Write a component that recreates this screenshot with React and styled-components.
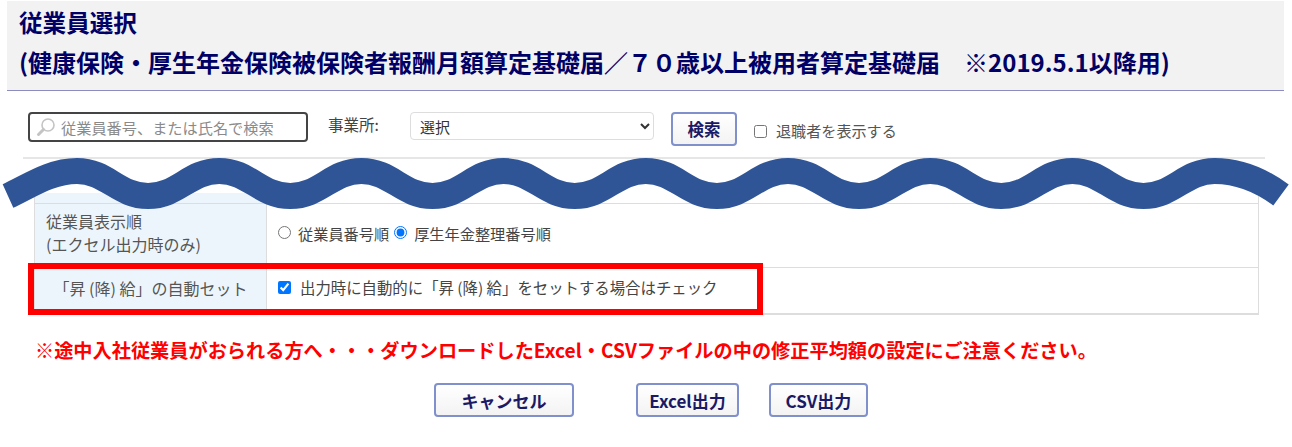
import React from "react";
import styled, { createGlobalStyle } from "styled-components";

const GlobalStyle = createGlobalStyle`
  html, body {
    margin: 0;
    padding: 0;
    background: #fff;
    font-family: "Noto Sans CJK JP", "Noto Sans", sans-serif;
    color: #444;
  }
`;

const Page = styled.div`
  position: relative;
  width: 1292px;
  height: 447px;
  overflow: hidden;
`;

const Header = styled.header`
  box-sizing: border-box;
  margin: 1px 8px 0 7px;
  height: 90px;
  padding: 0 0 0 12px;
  background: #f2f2f2;
  border-bottom: 1px solid #8c8cc0;
  color: #000066;
`;

const Title = styled.h1`
  margin: 0;
  padding-top: 6px;
  font-size: 23.6px;
  line-height: 30px;
  font-weight: 700;
`;

const SubTitle = styled.h2`
  margin: 0;
  padding-top: 9px;
  font-size: 24px;
  line-height: 32px;
  font-weight: 700;
  white-space: pre;
`;

const Toolbar = styled.div`
  display: flex;
  align-items: flex-start;
  margin: 21px 27px 0 23px;
  height: 45px;
  border-bottom: 2px solid #e6e6e6;
  font-size: 14px;
`;

const SearchBox = styled.div`
  box-sizing: border-box;
  display: flex;
  align-items: center;
  gap: 5px;
  width: 280px;
  height: 30px;
  margin-left: 5px;
  padding-left: 6px;
  border: 2px solid #444;
  border-radius: 4px;
  color: #8a8a8a;
  font-size: 15.2px;
`;

const FieldLabel = styled.span`
  margin: 0 0 0 20px;
  width: 82px;
  line-height: 24px;
  font-size: 15.5px;
`;

const Select = styled.select`
  box-sizing: border-box;
  width: 244px;
  height: 28px;
  padding-left: 5px;
  background: #fff;
  border: 1px solid #ddd;
  border-radius: 4px;
  color: #333;
  font-family: inherit;
  font-size: 15px;
`;

const Button = styled.button`
  box-sizing: border-box;
  width: ${(p) => p.$width}px;
  height: 34px;
  margin: 0;
  padding: 0;
  background: linear-gradient(#fff, #f3f3f3);
  border: 2px solid #7f90cc;
  border-radius: 4px;
  color: #1a1a66;
  font-family: "Noto Sans CJK JP", sans-serif;
  font-size: ${(p) => p.$size || 17}px;
  font-weight: 700;
`;

const SearchButton = styled(Button)`
  margin: 0 0 0 17px;
`;

const RetiredLabel = styled.label`
  display: flex;
  align-items: center;
  gap: 9px;
  margin: 7px 0 0 17px;
  font-size: 15.1px;
  line-height: 22px;
  color: #555;

  input {
    width: 13px;
    height: 13px;
    margin: 2px 0 0;
  }
`;

const Table = styled.div`
  position: relative;
  margin: 34px 0 0 34px;
  width: 1223px;
  border-right: 1px solid #ddd;
  border-bottom: 1px solid #ddd;
  border-left: 1px solid #ddd;
`;

const Row = styled.div`
  display: grid;
  grid-template-columns: 232px 1fr;
  height: ${(p) => p.$height}px;
  border-bottom: 1px solid #ddd;

  &:last-of-type {
    border-bottom: none;
  }
`;

const LabelCell = styled.div`
  box-sizing: border-box;
  display: flex;
  flex-direction: column;
  justify-content: center;
  align-items: ${(p) => (p.$center ? "center" : "flex-start")};
  padding: 0 0 5px ${(p) => (p.$center ? 0 : 11)}px;
  background: #edf5fc;
  border-right: 1px solid #ddd;
  font-size: 16px;
  line-height: 23px;
  color: #555;
`;

const ValueCell = styled.div`
  display: flex;
  align-items: center;
  padding-left: 10px;
  color: #444;
  font-size: 15.2px;

  input {
    width: 13px;
    height: 13px;
    margin: 0 7px 0 1px;
  }
`;

const RadioLabel = styled.label`
  display: flex;
  align-items: center;
  margin-right: 4px;
  margin-bottom: 6px;
`;

const CheckLabel = styled.label`
  display: flex;
  align-items: center;
  margin-bottom: 7px;
  font-size: 15.4px;

  input {
    margin-right: 9px;
  }
`;

const RedFrame = styled.div`
  position: absolute;
  left: -7px;
  top: 70px;
  box-sizing: border-box;
  width: 735px;
  height: 52px;
  border: 6px solid #ff0000;
  pointer-events: none;
`;

const Notice = styled.p`
  margin: 22px 0 0 35px;
  font-size: 19.2px;
  line-height: 26px;
  font-weight: 700;
  color: #ff0000;
  white-space: nowrap;
`;

const Actions = styled.div`
  display: flex;
  margin: 20px 0 0 434px;

  button:nth-child(2) {
    margin-left: 62px;
  }

  button:nth-child(3) {
    margin-left: 30px;
  }
`;

const WaveSvg = styled.svg`
  position: absolute;
  left: 0;
  top: 150px;
`;

// crests and troughs of the wave, 71.1px apart
const wavePath = () => {
  let d = "M8 46 C28 37 50 21 77 21";
  let x = 77;
  let y = 21;
  let nextX = 148.1;
  let up = false;
  while (nextX < 1220) {
    const ny = up ? 21 : 46;
    const h = (nextX - x) * 0.42;
    d += ` C${x + h} ${y} ${nextX - h} ${ny} ${nextX} ${ny}`;
    x = nextX;
    y = ny;
    nextX += 71.1;
    up = !up;
  }
  d += ` C${x + 26} ${y} 1262 31 1281 45`;
  return d;
};

function Wave() {
  return (
    <WaveSvg width="1292" height="70" viewBox="0 0 1292 70">
      <path d={wavePath()} fill="none" stroke="#2f5597" strokeWidth="26" />
    </WaveSvg>
  );
}

function SearchIcon() {
  return (
    <svg width="20" height="20" viewBox="0 0 20 20">
      <circle cx="12" cy="8" r="6" fill="#fff" stroke="#c4c4c4" strokeWidth="1.6" />
      <path d="M7.5 12.5 L2.5 17.5" stroke="#c4c4c4" strokeWidth="3" strokeLinecap="round" />
    </svg>
  );
}

export default function App() {
  return (
    <Page>
      <GlobalStyle />
      <Header>
        <Title>従業員選択</Title>
        <SubTitle>(健康保険・厚生年金保険被保険者報酬月額算定基礎届／７０歳以上被用者算定基礎届　※2019.5.1以降用)</SubTitle>
      </Header>
      <Toolbar>
        <SearchBox>
          <SearchIcon />
          従業員番号、または氏名で検索
        </SearchBox>
        <FieldLabel>事業所:</FieldLabel>
        <Select defaultValue="">
          <option value="">選択</option>
        </Select>
        <SearchButton $width={66} $size={16.5}>検索</SearchButton>
        <RetiredLabel>
          <input type="checkbox" />
          退職者を表示する
        </RetiredLabel>
      </Toolbar>
      <Table>
        <Row $height={10}>
          <LabelCell />
          <ValueCell />
        </Row>
        <Row $height={63}>
          <LabelCell>
            <span>従業員表示順</span>
            <span>(エクセル出力時のみ)</span>
          </LabelCell>
          <ValueCell>
            <RadioLabel>
              <input type="radio" name="order" />
              従業員番号順
            </RadioLabel>
            <RadioLabel>
              <input type="radio" name="order" defaultChecked />
              厚生年金整理番号順
            </RadioLabel>
          </ValueCell>
        </Row>
        <Row $height={45}>
          <LabelCell $center>「昇 (降) 給」の自動セット</LabelCell>
          <ValueCell>
            <CheckLabel>
              <input type="checkbox" defaultChecked />
              出力時に自動的に「昇 (降) 給」をセットする場合はチェック
            </CheckLabel>
          </ValueCell>
        </Row>
        <RedFrame />
      </Table>
      <Notice>※途中入社従業員がおられる方へ・・・ダウンロードしたExcel・CSVファイルの中の修正平均額の設定にご注意ください。</Notice>
      <Actions>
        <Button $width={140}>キャンセル</Button>
        <Button $width={103}>Excel出力</Button>
        <Button $width={99}>CSV出力</Button>
      </Actions>
      <Wave />
    </Page>
  );
}
